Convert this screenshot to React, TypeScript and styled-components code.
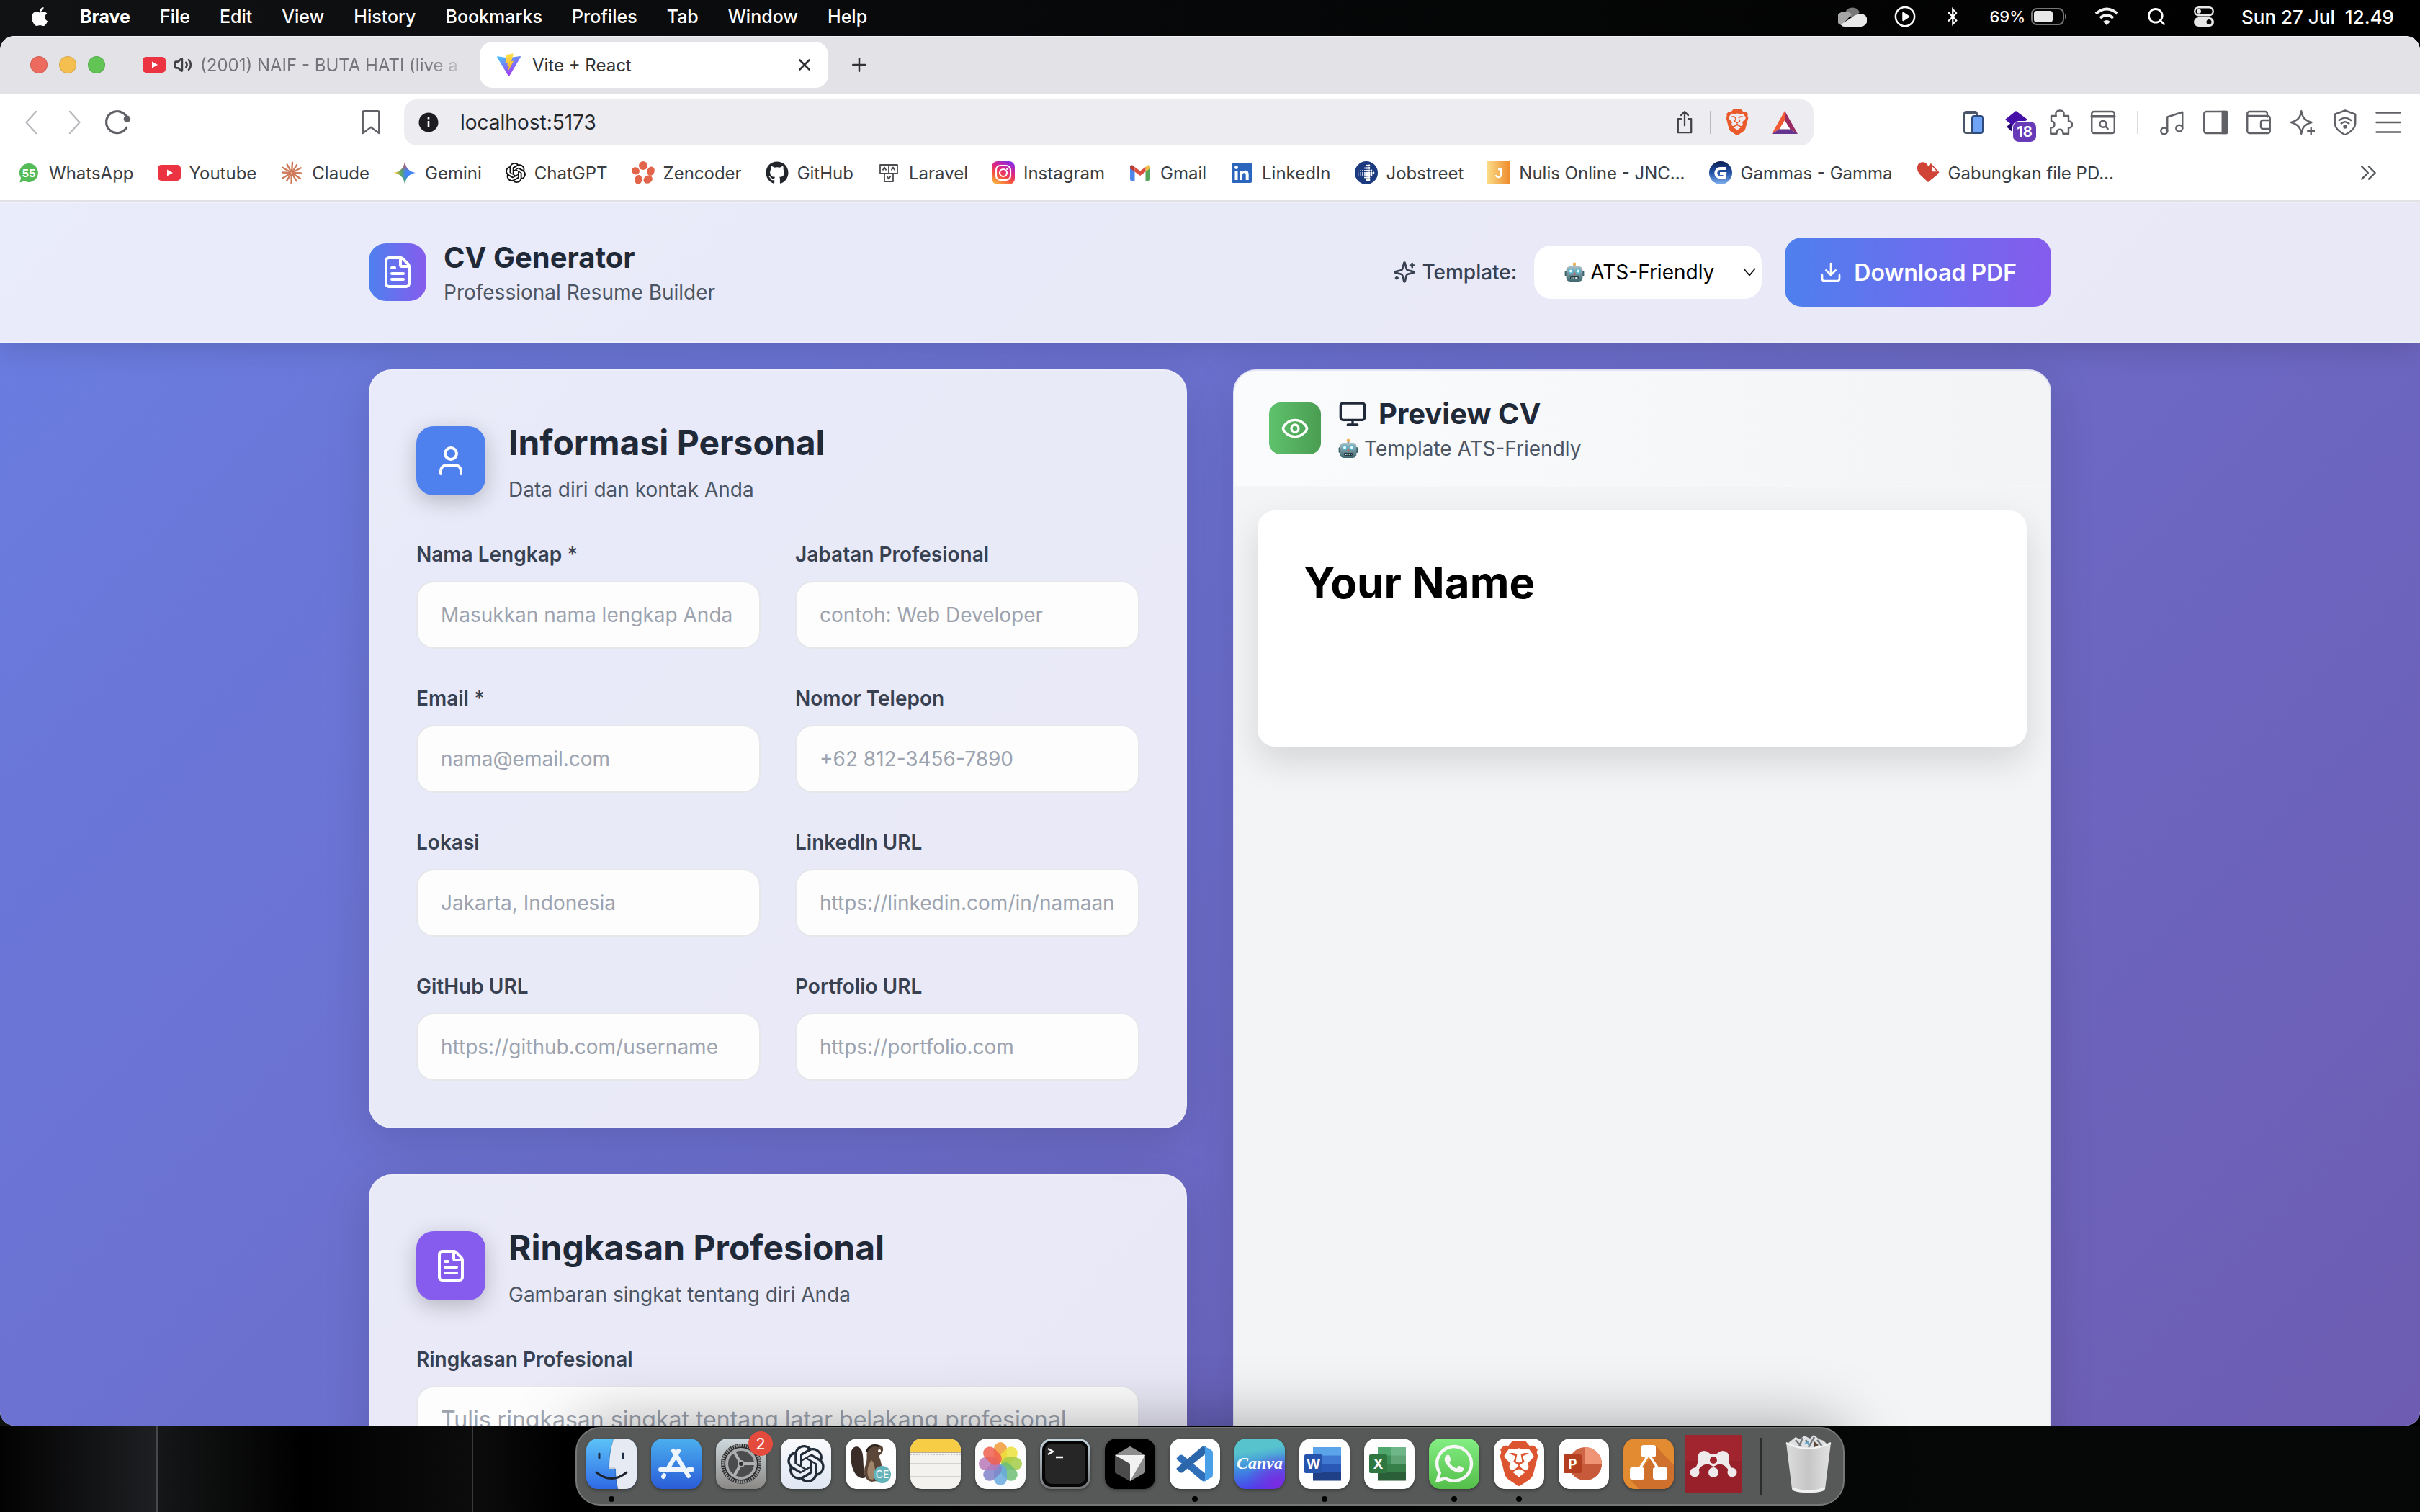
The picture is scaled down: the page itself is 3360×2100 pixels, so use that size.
import React, { useId } from "react";
import styled, { createGlobalStyle } from "styled-components";
import { Download, Eye, FileText, Monitor, Search, User, Volume2, X, Plus } from "lucide-react";
import { FaApple, FaBluetoothB, FaGithub, FaWhatsapp } from "react-icons/fa";
import { SiOpenai, SiBrave } from "react-icons/si";

const GlobalStyle = createGlobalStyle`
  * { box-sizing: border-box; }
  body { margin: 0; overflow: hidden; font-family: Inter, "Liberation Sans", sans-serif; }
  h1, h2, p { margin: 0; }
  button, input, select, textarea { font: inherit; border: 0; margin: 0; }
  button { padding: 0; background: none; color: inherit; cursor: pointer; }
  svg { display: block; flex: none; }
`;

/* ---------- desktop ---------- */

const Desktop = styled.div`
  display: grid;
  grid-template-rows: 50px minmax(0, 1fr) 120px;
  height: 100vh;
  background: linear-gradient(90deg, #111214 0%, #08090a 40%, #000 100%);
`;

const MenuBar = styled.nav`
  display: flex;
  align-items: center;
  justify-content: space-between;
  padding: 0 36px 4px 40px;
  color: #fff;
`;

const MenuGroup = styled.div<{ $gap: number; $size: number }>`
  display: flex;
  align-items: center;
  gap: ${(p) => p.$gap}px;
  font-size: ${(p) => p.$size}px;
  font-weight: 500;
  white-space: pre;
`;

const MenuItem = styled.button<{ $bold?: boolean }>`
  font-weight: ${(p) => (p.$bold ? 700 : 500)};
`;

const Battery = styled.span`
  display: flex;
  align-items: center;
  gap: 8px;
  font-size: 22px;
`;

/* ---------- browser ---------- */

const Window = styled.div`
  display: flex;
  flex-direction: column;
  min-height: 0;
  overflow: hidden;
  border-radius: 20px;
  background: #fff;
`;

const TabStrip = styled.div`
  display: flex;
  align-items: center;
  flex: none;
  height: 80px;
  padding: 0 42px 2px;
  background: #e3e2e7;
  border-top: 2px solid #f3f3f5;
  color: #303236;
  font-size: 24px;
`;

const Lights = styled.div`
  display: flex;
  gap: 16px;
`;

const Light = styled.button<{ $color: string }>`
  width: 24px;
  height: 24px;
  border-radius: 50%;
  background: ${(p) => p.$color};
  box-shadow: inset 0 0 0 1px rgba(0, 0, 0, 0.12);
`;

const BackgroundTab = styled.button`
  display: flex;
  align-items: center;
  gap: 11px;
  width: 448px;
  margin-left: 52px;
  margin-right: 20px;
  color: #74757a;
`;

const FadedTitle = styled.span`
  white-space: nowrap;
  mask-image: linear-gradient(90deg, #000 88%, transparent 105%);
`;

const ActiveTab = styled.div`
  display: flex;
  align-items: center;
  gap: 16px;
  width: 484px;
  height: 64px;
  padding: 0 20px 0 24px;
  border-radius: 18px;
  background: #fff;
  span { flex: 1; }
`;

const NewTab = styled.button`
  margin-left: 28px;
`;

const Toolbar = styled.div`
  display: flex;
  align-items: center;
  flex: none;
  height: 80px;
  padding: 0 26px;
  color: #5f6166;
`;

const NavButtons = styled.div`
  display: flex;
  align-items: center;
  gap: 23px;
  flex: 1;
`;

const SaveButton = styled.button`
  margin-right: 28px;
`;

const AddressBar = styled.div`
  display: flex;
  align-items: center;
  gap: 28px;
  width: 1957px;
  height: 64px;
  padding: 0 20px;
  border-radius: 18px;
  background: #edecf1;
  color: #414347;
`;

const AddressInput = styled.input`
  flex: 1;
  min-width: 0;
  padding: 0 0 0 2px;
  background: none;
  color: #26272b;
  font-size: 28px;
  outline: none;
`;

const AddressActions = styled.div`
  display: flex;
  align-items: center;
  gap: 18px;
`;

const Divider = styled.i<{ $color: string; $space: number }>`
  width: 2px;
  height: 32px;
  margin: 0 ${(p) => p.$space}px;
  background: ${(p) => p.$color};
`;

const Extensions = styled.div`
  display: flex;
  align-items: center;
  gap: 24px;
  justify-content: flex-end;
  width: 816px;
`;

const BadgeButton = styled.button`
  position: relative;
`;

const Badge = styled.span`
  position: absolute;
  left: 12px;
  top: 16px;
  width: 34px;
  height: 30px;
  border: 1px solid #fff;
  border-radius: 9px;
  background: #673ab7;
  color: #fff;
  font-size: 20px;
  font-weight: 700;
  line-height: 28px;
  text-align: center;
`;

const Bookmarks = styled.nav`
  display: flex;
  align-items: center;
  flex: none;
  gap: 33px;
  height: 70px;
  padding: 0 58px 8px 24px;
  border-bottom: 2px solid #e2e1e6;
  font-size: 24px;
`;

const Bookmark = styled.a`
  display: flex;
  align-items: center;
  gap: 12px;
  color: #3b3d41;
  text-decoration: none;
  white-space: nowrap;
`;

const MoreBookmarks = styled.button`
  margin-left: auto;
`;

/* ---------- page ---------- */

const Page = styled.div`
  flex: 1;
  min-height: 0;
  overflow: hidden;
  background: linear-gradient(135deg, #6a7de1 0%, #6d5cb2 100%);
`;

const PageHeader = styled.header`
  border: solid rgba(255, 255, 255, 0.25);
  border-width: 2px 0;
  background: rgba(255, 255, 255, 0.85);
  box-shadow: 0 8px 40px rgba(0, 0, 0, 0.14);
`;

const Container = styled.div`
  max-width: 2400px;
  margin: 0 auto;
  padding: 0 32px;
`;

const HeaderRow = styled(Container)`
  display: flex;
  align-items: center;
  justify-content: space-between;
  padding-top: 48px;
  padding-bottom: 48px;
`;

const Brand = styled.div`
  display: flex;
  align-items: center;
  gap: 24px;
`;

const IconTile = styled.span<{ $size: number; $bg: string; $raised?: boolean; $radius?: number }>`
  display: grid;
  place-items: center;
  flex: none;
  width: ${(p) => p.$size}px;
  height: ${(p) => p.$size}px;
  border-radius: ${(p) => p.$radius ?? 24}px;
  background: ${(p) => p.$bg};
  box-shadow: ${(p) => (p.$raised ? "0 8px 30px rgba(0, 0, 0, 0.22)" : "none")};
  color: #fff;
`;

const SmallTitle = styled.h1`
  display: flex;
  align-items: center;
  gap: 16px;
  color: #1f2937;
  font-size: 40px;
  font-weight: 700;
  line-height: 56px;
`;

const SmallNote = styled.p`
  display: flex;
  align-items: center;
  gap: 8px;
  color: #4b5563;
  font-size: 28px;
  line-height: 40px;
`;

const Actions = styled.div`
  display: flex;
  align-items: center;
`;

const TemplateLabel = styled.label`
  display: flex;
  align-items: center;
  gap: 8px;
  margin-right: 24px;
  color: #374151;
  font-size: 28px;
  font-weight: 500;
`;

const SelectBox = styled.div`
  display: flex;
  align-items: center;
  gap: 8px;
  width: 316px;
  height: 74px;
  margin-right: 32px;
  padding: 0 8px 0 42px;
  border-radius: 24px;
  background: #fff;
`;

const TemplateSelect = styled.select`
  flex: 1;
  min-width: 0;
  padding: 0;
  appearance: none;
  background: none;
  color: #000;
  font-size: 28px;
  outline: none;
`;

const DownloadButton = styled.button`
  display: flex;
  align-items: center;
  gap: 16px;
  height: 96px;
  padding: 0 48px;
  border-radius: 24px;
  background: linear-gradient(90deg, #4e80ee, #855ced);
  color: #fff;
  font-size: 32px;
  font-weight: 600;
`;

const Columns = styled(Container)`
  display: grid;
  grid-template-columns: 1fr 1fr;
  align-items: start;
  gap: 64px;
  padding-top: 37px;
`;

const FormColumn = styled.div`
  display: grid;
  gap: 64px;
`;

const FormCard = styled.section`
  padding: 64px;
  border: 2px solid rgba(255, 255, 255, 0.2);
  border-radius: 32px;
  background: rgba(255, 255, 255, 0.85);
  box-shadow: 0 16px 64px rgba(0, 0, 0, 0.13);
`;

const CardHeader = styled.header`
  display: flex;
  align-items: center;
  gap: 32px;
  margin-bottom: 48px;
`;

const CardTitle = styled.h2`
  margin-bottom: 8px;
  color: #1f2937;
  font-size: 48px;
  font-weight: 700;
  line-height: 72px;
`;

const CardNote = styled.p`
  color: #4b5563;
  font-size: 28px;
  line-height: 42px;
`;

const Fields = styled.div<{ $columns: number }>`
  display: grid;
  grid-template-columns: repeat(${(p) => p.$columns}, minmax(0, 1fr));
  gap: 48px;
`;

const Field = styled.div`
  display: grid;
  gap: 16px;
`;

const FieldLabel = styled.label`
  color: #374151;
  font-size: 28px;
  font-weight: 600;
  line-height: 42px;
`;

const TextInput = styled.input`
  width: 100%;
  height: 94px;
  padding: 24px 32px;
  border: 2px solid #e5e7eb;
  border-radius: 24px;
  background: #fdfdfe;
  color: #1f2937;
  font-size: 28px;
  line-height: 42px;
  outline: none;
  &::placeholder { color: #9ca3af; opacity: 1; }
`;

const TextArea = styled(TextInput).attrs({ as: "textarea" })`
  height: 240px;
  font-size: 32px;
  resize: none;
`;

const PreviewCard = styled.section`
  min-height: 1700px;
  overflow: hidden;
  border: 2px solid #e2e3f5;
  border-radius: 32px;
  background: #f3f4f6;
  box-shadow: 0 16px 64px rgba(0, 0, 0, 0.13);
`;

const PreviewHeader = styled.header`
  display: flex;
  align-items: center;
  gap: 24px;
  padding: 32px 48px;
  border-bottom: 2px solid #f6f7f9;
  background: linear-gradient(90deg, #fafbfd, #f3f4f6);
`;

const Paper = styled.article`
  min-height: 328px;
  margin: 32px;
  padding: 64px;
  border-radius: 24px;
  background: #fff;
  box-shadow: 0 20px 50px rgba(0, 0, 0, 0.13);
  color: #000;
  font-size: 60px;
  font-weight: 700;
  line-height: 72px;
`;

/* ---------- dock ---------- */

const DockArea = styled.footer`
  display: flex;
  align-items: flex-start;
  justify-content: center;
  padding-top: 2px;
  background:
    linear-gradient(#46474a, #46474a) 217px 0 / 2px 100% no-repeat,
    linear-gradient(#3a3a3c, #3a3a3c) 655px 0 / 2px 100% no-repeat,
    linear-gradient(90deg, #020202 0, #1e1f22 216px, #151617 220px, #000 420px, #0c0c0d 655px, #000 800px, #060707 2700px);
`;

const Dock = styled.div`
  display: flex;
  align-items: center;
  gap: 10px;
  height: 109px;
  padding: 0 8px;
  border: 2px solid #767777;
  border-radius: 34px;
  background: #575858;
  box-shadow: 0 0 90px rgba(0, 0, 0, 0.35);
  z-index: 1;
`;

const DockItem = styled.button`
  position: relative;
  display: grid;
  place-items: center;
  width: 80px;
  height: 82px;
  margin-bottom: 8px;
`;

const RunningDot = styled.i`
  position: absolute;
  left: 36px;
  bottom: -12px;
  width: 8px;
  height: 8px;
  border-radius: 50%;
  background: #000;
`;

const Notification = styled.span`
  position: absolute;
  right: -4px;
  top: -4px;
  width: 34px;
  height: 34px;
  border-radius: 50%;
  background: #e54b3c;
  color: #fff;
  font-size: 22px;
  line-height: 34px;
`;

const DockDivider = styled.i`
  width: 2px;
  height: 80px;
  margin: 0 15px;
  background: #2c2c2d;
`;

const Tile = styled.span<{ $bg: string }>`
  display: grid;
  place-items: center;
  width: 70px;
  height: 70px;
  overflow: hidden;
  border-radius: 16px;
  background: ${(p) => p.$bg};
  box-shadow: 0 2px 4px rgba(0, 0, 0, 0.35);
`;

/* ---------- small drawings ---------- */

type LineProps = { size?: number; stroke?: number; children: React.ReactNode };
const Line = ({ size = 36, stroke = 1.6, children }: LineProps) => (
  <svg width={size} height={size} viewBox="0 0 24 24" fill="none" stroke="currentColor" strokeWidth={stroke} strokeLinecap="round" strokeLinejoin="round">
    {children}
  </svg>
);

const SparklesIcon = () => (
  <Line size={32} stroke={2}>
    <path d="M9.937 15.5A2 2 0 0 0 8.5 14.063l-6.135-1.582a.5.5 0 0 1 0-.962L8.5 9.936A2 2 0 0 0 9.937 8.5l1.582-6.135a.5.5 0 0 1 .963 0L14.063 8.5A2 2 0 0 0 15.5 9.937l6.135 1.581a.5.5 0 0 1 0 .964L15.5 14.063a2 2 0 0 0-1.437 1.437l-1.582 6.135a.5.5 0 0 1-.963 0z" />
    <path d="M20 3v4M22 5h-4M4 17v2M5 18H3" />
  </Line>
);

const Robot = ({ size = 28 }: { size?: number }) => {
  const id = useId();
  return (
    <svg width={size} height={size} viewBox="0 0 28 28">
      <defs>
        <linearGradient id={id} x1="0" y1="0" x2="0" y2="1">
          <stop offset="0" stopColor="#a9c0c6" />
          <stop offset="1" stopColor="#3f6871" />
        </linearGradient>
      </defs>
      <rect x="12.6" y="3" width="2.8" height="4" fill="#7f8f94" />
      <circle cx="14" cy="2.6" r="2.2" fill="#eeb04a" />
      <rect x="0.6" y="12" width="4" height="8" rx="1.6" fill="#3c626b" />
      <rect x="23.4" y="12" width="4" height="8" rx="1.6" fill="#3c626b" />
      <rect x="2.6" y="6" width="22.8" height="21" rx="5" fill={`url(#${id})`} />
      <circle cx="9" cy="12.4" r="3.6" fill="#55b4cf" />
      <circle cx="19" cy="12.4" r="3.6" fill="#55b4cf" />
      <circle cx="9" cy="12.4" r="2" fill="#e8fbff" />
      <circle cx="19" cy="12.4" r="2" fill="#e8fbff" />
      <path d="M14 14l1.8 3.4h-3.6z" fill="#d05a4a" />
      <rect x="8" y="20" width="12" height="4" rx="1.4" fill="#203a41" />
      <path d="M9.6 22h8.8" stroke="#dfe9ea" strokeWidth="2" strokeDasharray="1.8 1" />
    </svg>
  );
};

const YoutubeIcon = () => (
  <svg width="32" height="24" viewBox="0 0 32 24">
    <rect y="1" width="32" height="22" rx="5" fill="#ec3341" />
    <path d="M13 7.5v9l8-4.5z" fill="#fff" />
  </svg>
);

const ViteIcon = () => (
  <svg width="33" height="32" viewBox="0 0 33 32">
    <defs>
      <linearGradient id="vite-body" x1="0" y1="0" x2="0.6" y2="1">
        <stop offset="0" stopColor="#41c8ff" />
        <stop offset="1" stopColor="#a833f5" />
      </linearGradient>
      <linearGradient id="vite-bolt" x1="0" y1="0" x2="0" y2="1">
        <stop offset="0" stopColor="#ffe34f" />
        <stop offset="1" stopColor="#f7a91c" />
      </linearGradient>
    </defs>
    <path d="M1 4.2l14.3 2.4L32 4.1c.8-.1 1.2.6.9 1.2L17.3 31.5c-.4.6-1.2.6-1.5 0L.2 5.4C-.1 4.8.3 4.1 1 4.2z" fill="url(#vite-body)" />
    <path d="M23 .2L12.4 2.2l-.7 11.600 3.400-.8-1 5 2.700-.8-1.700 8.400 8.300-15-3.300.7z" fill="url(#vite-bolt)" />
  </svg>
);

const WhatsAppBadgeIcon = () => (
  <svg width="32" height="32" viewBox="0 0 32 32">
    <path d="M16 3a13 13 0 1 1-6 24.600L3.500 29.500 5 23A13 13 0 0 1 16 3z" fill="#54bb58" />
    <text x="16" y="21.500" fill="#fff" fontSize="15" fontWeight="700" textAnchor="middle" fontFamily="Inter">55</text>
  </svg>
);

const ClaudeIcon = () => (
  <svg width="32" height="32" viewBox="0 0 32 32" stroke="#cf7b5c" strokeWidth="2.400" strokeLinecap="round">
    {[4, 33, 62, 92, 124, 150, 182, 212, 240, 272, 300, 331].map((a, i) => (
      <path key={a} d={`M16 14V${i % 2 ? 3 : 1.6}`} transform={`rotate(${a} 16 16)`} />
    ))}
  </svg>
);

const GeminiIcon = () => (
  <svg width="32" height="32" viewBox="0 0 32 32">
    <defs>
      <linearGradient id="gem-h" x1="0" y1="0" x2="1" y2="0">
        <stop offset="0.05" stopColor="#f3c332" />
        <stop offset="0.35" stopColor="#5aa46c" />
        <stop offset="0.55" stopColor="#4285f4" />
        <stop offset="1" stopColor="#4285f4" />
      </linearGradient>
      <linearGradient id="gem-v" x1="0" y1="0" x2="0" y2="1">
        <stop offset="0" stopColor="#e8453c" />
        <stop offset="0.42" stopColor="#e8453c" stopOpacity="0" />
        <stop offset="0.65" stopColor="#34a853" stopOpacity="0" />
        <stop offset="1" stopColor="#34a853" />
      </linearGradient>
    </defs>
    <path d="M16 1q2 12.500 15 15-13 2.500-15 15-2-12.500-15-15 13-2.500 15-15z" fill="url(#gem-h)" />
    <path d="M16 1q2 12.500 15 15-13 2.500-15 15-2-12.500-15-15 13-2.500 15-15z" fill="url(#gem-v)" />
  </svg>
);

const ZencoderIcon = () => (
  <svg width="32" height="32" viewBox="0 0 32 32" fill="#e2644a">
    <ellipse cx="16" cy="6" rx="6" ry="6" />
    <ellipse cx="5.600" cy="13.500" rx="5.600" ry="5" transform="rotate(25 6 13)" />
    <ellipse cx="26.400" cy="13.500" rx="5" ry="6.400" transform="rotate(20 26 14)" />
    <ellipse cx="9.500" cy="25.500" rx="5" ry="6.400" transform="rotate(10 10 25)" />
    <ellipse cx="22.500" cy="25.500" rx="6.400" ry="5.400" transform="rotate(-30 22 25)" />
  </svg>
);

const LaravelIcon = () => (
  <svg width="32" height="32" viewBox="0 0 32 32" fill="none" stroke="#4a4c50" strokeWidth="1.800" strokeLinejoin="round">
    <path d="M4 5h24v12H4zM16 5v12M10 17v11h12V17" />
    <path d="M7.500 12.500l2.500-4 2.500 4M19.500 12.500l2.500-4 2.500 4M13.500 20.500l2.500 4 2.500-4" />
  </svg>
);

const InstagramIcon = () => (
  <svg width="32" height="32" viewBox="0 0 32 32">
    <defs>
      <linearGradient id="insta" x1="0.2" y1="1" x2="0.7" y2="0">
        <stop offset="0" stopColor="#fcb443" />
        <stop offset="0.35" stopColor="#f5513e" />
        <stop offset="0.65" stopColor="#dc2683" />
        <stop offset="1" stopColor="#8a2be2" />
      </linearGradient>
    </defs>
    <rect width="32" height="32" rx="8" fill="url(#insta)" />
    <g fill="none" stroke="#fff" strokeWidth="2.200">
      <rect x="6" y="6" width="20" height="20" rx="6" />
      <circle cx="16" cy="16" r="5" />
    </g>
    <circle cx="21.600" cy="10.400" r="1.500" fill="#fff" />
  </svg>
);

const GmailIcon = () => (
  <svg width="32" height="32" viewBox="0 0 32 32">
    <path d="M2 9v16a2 2 0 0 0 2 2h4.500V14z" fill="#4f86ec" />
    <path d="M30 9v16a2 2 0 0 1-2 2h-4.500V14z" fill="#58a55c" />
    <path d="M23.500 14.500V8l2.600-2c1.700-1.200 3.900 0 3.900 2v2z" fill="#f1bd42" />
    <path d="M8.500 14.500V8L5.900 6C4.200 4.800 2 6 2 8v2z" fill="#b73a33" />
    <path d="M8.500 14.500V8l7.500 5.600L23.500 8v6.500L16 20z" fill="#d95040" />
  </svg>
);

const LinkedInIcon = () => (
  <svg width="32" height="32" viewBox="0 0 32 32">
    <rect x="2" y="2" width="28" height="28" rx="2" fill="#2c66bc" />
    <g fill="#fff">
      <circle cx="8.500" cy="8.500" r="2.400" />
      <path d="M6.500 13h4v13h-4zM13 13h3.800v1.900c.8-1.400 2.200-2.200 4-2.200 3.800 0 4.900 2.300 4.900 6V26h-4v-6.500c0-1.800-.4-3.200-2.200-3.200s-2.500 1.300-2.500 3.200V26h-4z" />
    </g>
  </svg>
);

const JobstreetIcon = () => (
  <svg width="32" height="32" viewBox="0 0 32 32">
    <circle cx="16" cy="16" r="16" fill="#1b3a80" />
    <g fill="#fff">
      {[6, 9.5, 13, 16, 19, 22.5, 26].map((y, r) =>
        [5, 8, 11, 14, 17, 20, 23, 26].map((x, c) => {
          const far = Math.abs(r - 3);
          const shown = far < 2 ? c < 8 - far : c === 4 || c === 5 || (far === 2 && c === 3);
          return shown ? <circle key={`${x}-${y}`} cx={x} cy={y} r={0.6 + Math.min(c, 5) * 0.16} /> : null;
        }),
      )}
    </g>
  </svg>
);

const NulisIcon = () => (
  <svg width="32" height="32" viewBox="0 0 32 32">
    <defs>
      <linearGradient id="nulis" x1="0" y1="0" x2="1" y2="0">
        <stop offset="0" stopColor="#fbdc86" />
        <stop offset="1" stopColor="#ee8a2b" />
      </linearGradient>
    </defs>
    <rect width="32" height="32" fill="url(#nulis)" />
    <path d="M15 11h4v7a3.500 3.500 0 0 1-7 1" fill="none" stroke="#fff" strokeWidth="2.600" />
  </svg>
);

const GammasIcon = () => (
  <svg width="32" height="32" viewBox="0 0 32 32">
    <defs>
      <linearGradient id="gammas" x1="0" y1="0" x2="0" y2="1">
        <stop offset="0" stopColor="#0a1c50" />
        <stop offset="0.5" stopColor="#2453a8" />
        <stop offset="1" stopColor="#7fb0ef" />
      </linearGradient>
    </defs>
    <circle cx="16" cy="16" r="16" fill="url(#gammas)" />
    <path d="M24 10h-8.500a6 6 0 0 0 0 12.500h5.500l1-5.500h-7" fill="none" stroke="#fff" strokeWidth="4" />
  </svg>
);

const HeartPdfIcon = () => (
  <svg width="32" height="32" viewBox="0 0 32 32">
    <path d="M16 29C9 22 1 17 1 10a7.500 7.500 0 0 1 15-2.500L19 3l12 12c-2 5-9 8.500-15 14z" fill="#d04438" />
    <path d="M20.500 4.500V15H30z" fill="#fff" stroke="#d04438" strokeWidth="1.600" />
  </svg>
);

const BatIcon = () => (
  <svg width="40" height="34" viewBox="0 0 40 34">
    <path d="M20 1L2 33l11-7 7-11z" fill="#f15a32" />
    <path d="M20 1l18 32-11-7-7-11z" fill="#9b2a63" />
    <path d="M2 33h36l-11-7H13z" fill="#65348f" />
    <path d="M20 14l7.500 12.500h-15z" fill="#fff" />
  </svg>
);

const bookmarks: [string, React.ReactNode][] = [
  ["WhatsApp", <WhatsAppBadgeIcon />],
  ["Youtube", <YoutubeIcon />],
  ["Claude", <ClaudeIcon />],
  ["Gemini", <GeminiIcon />],
  ["ChatGPT", <SiOpenai size={28} color="#111" />],
  ["Zencoder", <ZencoderIcon />],
  ["GitHub", <FaGithub size={32} color="#22262b" />],
  ["Laravel", <LaravelIcon />],
  ["Instagram", <InstagramIcon />],
  ["Gmail", <GmailIcon />],
  ["LinkedIn", <LinkedInIcon />],
  ["Jobstreet", <JobstreetIcon />],
  ["Nulis Online - JNC...", <NulisIcon />],
  ["Gammas - Gamma", <GammasIcon />],
  ["Gabungkan file PD...", <HeartPdfIcon />],
];

/* ---------- dock drawings ---------- */

const Art = ({ children }: { children: React.ReactNode }) => (
  <svg width="70" height="70" viewBox="0 0 70 70">{children}</svg>
);

const Finder = () => (
  <Tile $bg="linear-gradient(#5cc4f8, #2f69e6)">
    <Art>
      <path d="M38 0h32v70H44c-2-9-3-18-3-28h-9C32 26 34 12 38 0z" fill="#e6ebf3" />
      <path d="M18 21v6M51 21v6" stroke="#1d2c44" strokeWidth="3" strokeLinecap="round" />
      <path d="M14 47q21 17 42 0" fill="none" stroke="#1d2430" strokeWidth="3" strokeLinecap="round" />
      <path d="M38 0C34 12 31 26 31 41h9c0 10 1 20 4 29" fill="none" stroke="#1d2c44" strokeOpacity=".25" />
    </Art>
  </Tile>
);

const AppStore = () => (
  <Tile $bg="linear-gradient(#4bb0ef, #2a5cd8)">
    <Art>
      <g stroke="#eef5fd" strokeWidth="6" strokeLinecap="round">
        <path d="M38 17L22 44M31 17l21 35M13 43h31M52 43h5M18 51l-1 2" />
      </g>
    </Art>
  </Tile>
);

const Settings = () => (
  <Tile $bg="linear-gradient(#cfdadf, #8a8885)">
    <Art>
      <circle cx="35" cy="35" r="28" fill="#2a2a2a" />
      <circle cx="35" cy="35" r="25.500" fill="none" stroke="#97989a" strokeWidth="4" strokeDasharray="1.800 1.400" />
      <circle cx="35" cy="35" r="20" fill="#4b4c4d" stroke="#a8a9aa" strokeWidth="4" />
      <path d="M35 35h19M35 35l-10-17M35 35L25 52" stroke="#b0b1b2" strokeWidth="4" />
      <circle cx="35" cy="35" r="4" fill="#303030" stroke="#b0b1b2" strokeWidth="2" />
    </Art>
  </Tile>
);

const DBeaver = () => (
  <Tile $bg="#fff">
    <Art>
      <path d="M8 18c2-9 12-9 15 0 3 12 0 20 5 36-14 6-23-16-20-36z" fill="#3a2c27" />
      <path d="M36 60c-10-2-12-14-8-24 3-8 0-15 3-22 4-7 14-7 20-3 3 4 0 10-5 13 6 12 6 28-2 35z" fill="#5c4638" />
      <path d="M33 56c-5-8-2-20 3-26 5 4 7 18 2 27z" fill="#a1856b" />
      <path d="M29 18q6-12 18-7" fill="none" stroke="#2b211d" strokeWidth="3" />
      <circle cx="47" cy="17" r="2" fill="#fff" />
      <circle cx="51" cy="50" r="12" fill="#63b3bb" />
      <text x="51" y="55" fill="#fff" fontSize="14" fontFamily="Inter" textAnchor="middle">CE</text>
    </Art>
  </Tile>
);

const Notes = () => (
  <Tile $bg="#f3f2ef">
    <Art>
      <rect width="70" height="18" fill="#f6cd45" />
      <path d="M0 19h70" stroke="#b3ab98" strokeWidth="2" />
      <path d="M0 22h70" stroke="#c6c4c0" strokeWidth="2" strokeDasharray="2 2" />
      <path d="M0 35h70M0 53h70" stroke="#d3d2cf" strokeWidth="2" />
    </Art>
  </Tile>
);

const Photos = () => (
  <Tile $bg="#fcfcfc">
    <Art>
      {["#f29a37", "#ece03c", "#a3cb47", "#6dbd75", "#68a9de", "#7f82c8", "#b978b8", "#ee5f4e"].map((c, i) => (
        <rect key={c} x="26" y="5" width="18" height="29" rx="9" fill={c} fillOpacity=".85" transform={`rotate(${i * 45} 35 35)`} />
      ))}
    </Art>
  </Tile>
);

const Terminal = () => (
  <Tile $bg="linear-gradient(#c6d7e0, #737577)">
    <Art>
      <rect x="3" y="3" width="64" height="64" rx="13" fill="#050505" />
      <rect x="7" y="7" width="56" height="56" rx="9" fill="#262627" />
      <path d="M11 14l7 4-7 4M22 26h10" fill="none" stroke="#fff" strokeWidth="2.400" />
    </Art>
  </Tile>
);

const Cursor = () => (
  <Tile $bg="#000">
    <Art>
      <path d="M35 11l21 12v24L35 59 14 47V23z" fill="#6d6d6d" />
      <path d="M35 11l21 12H14z" fill="#8d8d8d" />
      <path d="M14 23l21 12v24L14 47z" fill="#4b4b4b" />
      <path d="M35 35v24l21-12V23z" fill="#8b8b8b" />
      <path d="M14 23h42L35 59V35z" fill="#f2f2f2" />
    </Art>
  </Tile>
);

const VSCode = () => (
  <Tile $bg="#fff">
    <Art>
      <path d="M10 27l4-4q2-1 4 0l32 26v10q-3 1-6-1L10 29q-1-1 0-2z" fill="#2f6fba" />
      <path d="M10 43l4 4q2 1 4 0l32-26V11q-3-1-6 1L10 41q-1 1 0 2z" fill="#2a66a9" />
      <path d="M46 11q1-1 3 0l9 5q2 1 2 4v30q0 3-2 4l-9 5q-2 1-3 0 3 0 3-4V15q0-4-3-4z" fill="#4aa0e8" />
    </Art>
  </Tile>
);

const Canva = () => (
  <Tile $bg="radial-gradient(circle at 85% 90%, #7b2be0 0, transparent 50%), linear-gradient(170deg, #57c4cd 25%, #3f8ae0 55%, #4a2cf0 100%)">
    <Art>
      <text x="35" y="42" fill="#fff" fontSize="24" fontStyle="italic" fontWeight="700" fontFamily="Liberation Serif" textAnchor="middle">Canva</text>
    </Art>
  </Tile>
);

type OfficeProps = { letter: string; box: string; rows: string[]; round?: boolean };
const Office = ({ letter, box, rows, round }: OfficeProps) => (
  <Tile $bg="#fff">
    <Art>
      {round ? (
        <>
          <circle cx="37" cy="35" r="23" fill={rows[0]} />
          <path d="M37 12a23 23 0 0 1 23 23H37z" fill={rows[1]} />
          <path d="M14 35h46a23 23 0 0 1-46 0z" fill={rows[2]} />
        </>
      ) : (
        rows.map((c, i) => <rect key={c} x="19" y={12 + i * 11.5} width="39" height="12" fill={c} />)
      )}
      {!round && letter === "X" ? <rect x="38" y="12" width="20" height="23" fill="#fff" fillOpacity=".18" /> : null}
      <rect x="7" y="22" width="25" height="26" rx="2" fill={box} />
      <text x="19.500" y="42" fill="#fff" fontSize="19" fontWeight="700" fontFamily="Inter" textAnchor="middle">{letter}</text>
    </Art>
  </Tile>
);

const DrawIo = () => (
  <Tile $bg="#e38b30">
    <Art>
      <path d="M44 9l26 28v33H22L10 58l25-28z" fill="#cf702c" />
      <path d="M35 22L20 46M35 22l16 24" stroke="#fff" strokeWidth="3.500" />
      <g fill="#fff">
        <rect x="25" y="9" width="20" height="17" rx="3" />
        <rect x="9" y="40" width="20" height="17" rx="3" />
        <rect x="41" y="40" width="20" height="17" rx="3" />
      </g>
    </Art>
  </Tile>
);

const Mendeley = () => (
  <svg width="80" height="80" viewBox="0 0 80 80">
    <rect width="80" height="80" rx="3" fill="#98202a" />
    <rect width="80" height="36" rx="3" fill="#a0252f" />
    <g fill="#eee9ea">
      <circle cx="27" cy="31" r="9" />
      <circle cx="53" cy="31" r="9" />
      <circle cx="40" cy="52" r="7" />
      <circle cx="14" cy="52" r="6.500" />
      <circle cx="66" cy="52" r="6.500" />
      <path d="M18 30c1 10-1 14-5 17l6 2c3-5 7-8 13-9l8 4 8-4c6 1 10 4 13 9l6-2c-4-3-6-7-5-17l-14-6q-8 6-16 0z" />
    </g>
    <circle cx="40" cy="35" r="5" fill="#a0252f" />
  </svg>
);

const Trash = () => (
  <svg width="64" height="82" viewBox="0 0 64 82">
    <defs>
      <linearGradient id="bin" x1="0" y1="0" x2="1" y2="0">
        <stop offset="0" stopColor="#dcdcdc" />
        <stop offset="0.5" stopColor="#c6c6c6" />
        <stop offset="1" stopColor="#e2e2e2" />
      </linearGradient>
    </defs>
    <path d="M4 12L14 4l6 3 6-5 8 4 5-5 8 6 6 2 5 5-6 8H8z" fill="#dfe0e1" />
    <path d="M14 8l8 9M24 5l-5 12M40 4l-8 14M44 8l8 10M28 8l6 8" stroke="#75797d" strokeWidth="2.500" />
    <path d="M26 12l6-2 2 5z" fill="#5aa7cf" />
    <path d="M40 10l6 5-6 3z" fill="#5a4636" />
    <path d="M1 12q31 16 62 0l-8 64q-1 5-23 5T9 76z" fill="url(#bin)" />
    <path d="M1 12q31 16 62 0" fill="none" stroke="#f4f4f4" strokeWidth="2" />
    <path d="M9 74q23 7 46 0l-1 3q-4 4-22 4T10 77z" fill="#f1f1f1" />
  </svg>
);

type App = { name: string; art: React.ReactNode; running?: boolean; badge?: string };
const apps: App[] = [
  { name: "Finder", art: <Finder />, running: true },
  { name: "App Store", art: <AppStore /> },
  { name: "Settings", art: <Settings />, badge: "2" },
  { name: "ChatGPT", art: <Tile $bg="linear-gradient(#fbfbfd, #dfe6f2)"><SiOpenai size={52} color="#222b38" /></Tile> },
  { name: "DBeaver", art: <DBeaver /> },
  { name: "Notes", art: <Notes /> },
  { name: "Photos", art: <Photos /> },
  { name: "Terminal", art: <Terminal /> },
  { name: "Cursor", art: <Cursor /> },
  { name: "Code", art: <VSCode />, running: true },
  { name: "Canva", art: <Canva /> },
  { name: "Word", art: <Office letter="W" box="#2653ac" rows={["#5ba4ea", "#4079d2", "#2958b6", "#1f3f86"]} />, running: true },
  { name: "Excel", art: <Office letter="X" box="#2f7741" rows={["#4fa76e", "#3d9158", "#38804a", "#2b5f38"]} /> },
  { name: "WhatsApp", art: <Tile $bg="linear-gradient(#83ee82, #55bf4b)"><FaWhatsapp size={60} color="#f6f6f6" /></Tile>, running: true },
  { name: "Brave", art: <Tile $bg="#fff"><SiBrave size={62} color="#dd5530" /></Tile>, running: true },
  { name: "PowerPoint", art: <Office letter="P" box="#b43e20" rows={["#cf6547", "#ef9474", "#c65a3a"]} round /> },
  { name: "draw.io", art: <DrawIo /> },
  { name: "Mendeley", art: <Mendeley /> },
];

const fields: [string, string, string][] = [
  ["name", "Nama Lengkap *", "Masukkan nama lengkap Anda"],
  ["title", "Jabatan Profesional", "contoh: Web Developer"],
  ["email", "Email *", "nama@email.com"],
  ["phone", "Nomor Telepon", "+62 812-3456-7890"],
  ["location", "Lokasi", "Jakarta, Indonesia"],
  ["linkedin", "LinkedIn URL", "https://linkedin.com/in/namaanda"],
  ["github", "GitHub URL", "https://github.com/username"],
  ["portfolio", "Portfolio URL", "https://portfolio.com"],
];

const menus = ["File", "Edit", "View", "History", "Bookmarks", "Profiles", "Tab", "Window", "Help"];

const SystemMenu = () => (
  <MenuBar>
    <MenuGroup $gap={41} $size={25}>
      <FaApple size={30} />
      <MenuItem $bold>Brave</MenuItem>
      {menus.map((m) => <MenuItem key={m}>{m}</MenuItem>)}
    </MenuGroup>
    <MenuGroup $gap={38} $size={26}>
      <svg width="40" height="28" viewBox="0 0 40 28">
        <path d="M10 8a11 11 0 0 1 20 0l-8 8-14-4z" fill="#777" />
        <path d="M9 8a9 9 0 0 1 10 3L5 26A9 9 0 0 1 9 8z" fill="#a5a5a5" />
        <path d="M24 12l7-2a9 9 0 0 1 1 18H9q-4 0-5-3z" fill="#e9e9e9" />
      </svg>
      <Line size={30} stroke={2}><circle cx="12" cy="12" r="10.500" /><path d="M10 8v8l6-4z" fill="currentColor" /></Line>
      <FaBluetoothB size={26} />
      <Battery>
        69%
        <svg width="50" height="24" viewBox="0 0 50 24">
          <rect x="1" y="1" width="44" height="22" rx="7" fill="none" stroke="#777" strokeWidth="2" />
          <rect x="4" y="4" width="26" height="16" rx="4" fill="#e8e8e8" />
          <path d="M47 8q3 4 0 8z" fill="#777" />
        </svg>
      </Battery>
      <svg width="34" height="26" viewBox="0 0 34 26" fill="none" stroke="#f0f0f0" strokeWidth="4">
        <path d="M2 9q15-13 30 0M8 15q9-8 18 0" />
        <path d="M17 25l-5-5q5-4 10 0z" fill="#f0f0f0" stroke="none" />
      </svg>
      <Search size={28} strokeWidth={2.4} />
      <svg width="28" height="28" viewBox="0 0 28 28">
        <rect x="1.200" y="1.200" width="25.600" height="11" rx="5.500" fill="none" stroke="#e8e8e8" strokeWidth="2.400" />
        <circle cx="7" cy="6.700" r="3" fill="#e8e8e8" />
        <rect y="15" width="28" height="13" rx="6.500" fill="#e8e8e8" />
        <circle cx="21" cy="21.500" r="3.500" fill="#080808" />
      </svg>
      <span>Sun 27 Jul  12.49</span>
    </MenuGroup>
  </MenuBar>
);

const BrowserChrome = () => (
  <>
    <TabStrip>
      <Lights>
        <Light $color="#ed6a5f" aria-label="Close" />
        <Light $color="#f5bf4f" aria-label="Minimise" />
        <Light $color="#61c454" aria-label="Zoom" />
      </Lights>
      <BackgroundTab>
        <YoutubeIcon />
        <Volume2 size={26} strokeWidth={2.4} color="#3f4145" />
        <FadedTitle>(2001) NAIF - BUTA HATI (live a</FadedTitle>
      </BackgroundTab>
      <ActiveTab>
        <ViteIcon />
        <span>Vite + React</span>
        <button aria-label="Close tab"><X size={26} strokeWidth={2.4} /></button>
      </ActiveTab>
      <NewTab aria-label="New tab"><Plus size={30} /></NewTab>
    </TabStrip>
    <Toolbar>
      <NavButtons>
        <button aria-label="Back"><Line size={36}><path d="M16 2L7 12l9 10" stroke="#b9babd" /></Line></button>
        <button aria-label="Forward"><Line size={36}><path d="M8 2l9 10-9 10" stroke="#b9babd" /></Line></button>
        <button aria-label="Reload"><Line size={38} stroke={2}><path d="M20 16.500A9.500 9.500 0 1 1 20.500 8" /><circle cx="20.500" cy="9" r="2" fill="currentColor" /></Line></button>
      </NavButtons>
      <SaveButton aria-label="Bookmark this page"><Line size={36}><path d="M5.500 1.500h13a1 1 0 0 1 1 1V22L12 16.500 4.500 22V2.500a1 1 0 0 1 1-1z" /></Line></SaveButton>
      <AddressBar>
        <svg width="28" height="28" viewBox="0 0 28 28">
          <circle cx="14" cy="14" r="13.500" fill="#1d1d21" />
          <path d="M14 12v8M14 7v2.500" stroke="#fff" strokeWidth="2.600" />
        </svg>
        <AddressInput aria-label="Address" defaultValue="localhost:5173" />
        <AddressActions>
          <Line size={34}><path d="M8.500 8.500h-3v13.500h13V8.500h-3M12 15V2M8.500 5L12 1.500 15.500 5" /></Line>
          <Divider $color="#b9babd" $space={0} />
          <SiBrave size={36} color="#ea5a2b" />
        </AddressActions>
        <BatIcon />
      </AddressBar>
      <Extensions>
        <svg width="36" height="36" viewBox="0 0 36 36" strokeWidth="2">
          <rect x="5" y="3" width="18" height="30" rx="3" fill="#fff" stroke="#4b5568" />
          <path d="M5 5h18" stroke="#4b5568" strokeWidth="4" />
          <rect x="16" y="9" width="15" height="24" rx="3" fill="#6ea3f5" stroke="#2f4b7c" />
        </svg>
        <BadgeButton aria-label="Extension">
          <svg width="36" height="36" viewBox="0 0 36 36">
            <path d="M4 24l12-10 14 12-14 9z" fill="#24086b" />
            <path d="M17 2l16 12-16 12L2 14z" fill="#4410a8" />
          </svg>
          <Badge>18</Badge>
        </BadgeButton>
        <Line><path d="M4 6h4.500C7.500 2 9.500 1 12 1s4.500 1 3.500 5H20v5c2.500 0 3.300 1.500 3.300 3s-.8 3-3.300 3v5.500h-5c0-3-1.500-4-3-4s-3 1-3 4H3.500V17c3 0 3.500-1.500 3.500-3s-.5-3-3-3z" /></Line>
        <Line><rect x="1.500" y="2" width="21" height="20" rx="2" /><path d="M1.500 6.500h21" strokeWidth="2.400" /><circle cx="12" cy="13.500" r="3" /><path d="M14 15.500l2.500 2.500" /></Line>
        <Divider $color="#dcdce1" $space={5} />
        <Line><circle cx="4.500" cy="20" r="3" /><circle cx="18.500" cy="17.500" r="3" /><path d="M7.500 20V7L21.500 2.500v15" /></Line>
        <Line><rect x="1.500" y="2" width="21" height="20" rx="2" /><path d="M18.500 2h4v20h-4z" fill="currentColor" /></Line>
        <Line><path d="M20 7V4a2 2 0 0 0-2-2H3.500A2 2 0 0 0 1.500 4v16a2 2 0 0 0 2 2h17a2 2 0 0 0 2-2V8a2 2 0 0 0-2-2h-18M22.500 10H16a2 2 0 0 0-2 2v4a2 2 0 0 0 2 2h6.500" /></Line>
        <Line><path d="M11.500 1.500c1 6 3 8.500 9.500 10.500-6.500 2-8.500 4.500-9.500 10.500-1-6-3-8.500-9.500-10.500 6.500-2 8.500-4.500 9.500-10.500zM20.500 17v6M17.500 20h6" /></Line>
        <Line><path d="M12 1l9.500 3.500V13c0 5-4.500 8-9.500 10.500C7 21 2.500 18 2.500 13V4.500zM6.500 10q5.500-4.500 11 0M8.500 13q3.500-3 7 0" /><circle cx="12" cy="16" r="1" fill="currentColor" /></Line>
        <Line><path d="M1 3h22M1 12h22M1 21h22" /></Line>
      </Extensions>
    </Toolbar>
    <Bookmarks>
      {bookmarks.map(([label, icon]) => (
        <Bookmark key={label} href="#">
          {icon}
          {label}
        </Bookmark>
      ))}
      <MoreBookmarks aria-label="More bookmarks"><Line size={26} stroke={2.2}><path d="M3 4l8 8-8 8M12 4l8 8-8 8" stroke="#55575b" /></Line></MoreBookmarks>
    </Bookmarks>
  </>
);

const CvPage = () => (
  <Page>
    <PageHeader>
      <HeaderRow>
        <Brand>
          <IconTile $size={80} $bg="linear-gradient(90deg, #4e80ee, #855ced)"><FileText size={48} /></IconTile>
          <div>
            <SmallTitle>CV Generator</SmallTitle>
            <SmallNote>Professional Resume Builder</SmallNote>
          </div>
        </Brand>
        <Actions>
          <TemplateLabel htmlFor="template"><SparklesIcon />Template:</TemplateLabel>
          <SelectBox>
            <Robot />
            <TemplateSelect id="template"><option>ATS-Friendly</option></TemplateSelect>
            <Line size={18} stroke={2.4}><path d="M2 6l10 12L22 6" stroke="#111" /></Line>
          </SelectBox>
          <DownloadButton><Download size={32} />Download PDF</DownloadButton>
        </Actions>
      </HeaderRow>
    </PageHeader>
    <Columns>
      <FormColumn>
        <FormCard>
          <CardHeader>
            <IconTile $size={96} $bg="#4e80ee" $raised><User size={48} /></IconTile>
            <div>
              <CardTitle>Informasi Personal</CardTitle>
              <CardNote>Data diri dan kontak Anda</CardNote>
            </div>
          </CardHeader>
          <Fields $columns={2}>
            {fields.map(([id, label, hint]) => (
              <Field key={id}>
                <FieldLabel htmlFor={id}>{label}</FieldLabel>
                <TextInput id={id} placeholder={hint} />
              </Field>
            ))}
          </Fields>
        </FormCard>
        <FormCard>
          <CardHeader>
            <IconTile $size={96} $bg="#855ced" $raised><FileText size={48} /></IconTile>
            <div>
              <CardTitle>Ringkasan Profesional</CardTitle>
              <CardNote>Gambaran singkat tentang diri Anda</CardNote>
            </div>
          </CardHeader>
          <Fields $columns={1}>
            <Field>
              <FieldLabel htmlFor="summary">Ringkasan Profesional</FieldLabel>
              <TextArea id="summary" placeholder="Tulis ringkasan singkat tentang latar belakang profesional" />
            </Field>
          </Fields>
        </FormCard>
      </FormColumn>
      <PreviewCard>
        <PreviewHeader>
          <IconTile $size={72} $radius={16} $bg="linear-gradient(90deg, #5fc26c, #4a9d52)"><Eye size={40} /></IconTile>
          <div>
            <SmallTitle as="h2"><Monitor size={40} />Preview CV</SmallTitle>
            <SmallNote><Robot />Template ATS-Friendly</SmallNote>
          </div>
        </PreviewHeader>
        <Paper>Your Name</Paper>
      </PreviewCard>
    </Columns>
  </Page>
);

export default function App() {
  return (
    <Desktop>
      <GlobalStyle />
      <SystemMenu />
      <Window>
        <BrowserChrome />
        <CvPage />
      </Window>
      <DockArea>
        <Dock>
          {apps.map((app) => (
            <DockItem key={app.name} aria-label={app.name}>
              {app.art}
              {app.badge ? <Notification>{app.badge}</Notification> : null}
              {app.running ? <RunningDot /> : null}
            </DockItem>
          ))}
          <DockDivider />
          <DockItem aria-label="Trash"><Trash /></DockItem>
        </Dock>
      </DockArea>
    </Desktop>
  );
}
